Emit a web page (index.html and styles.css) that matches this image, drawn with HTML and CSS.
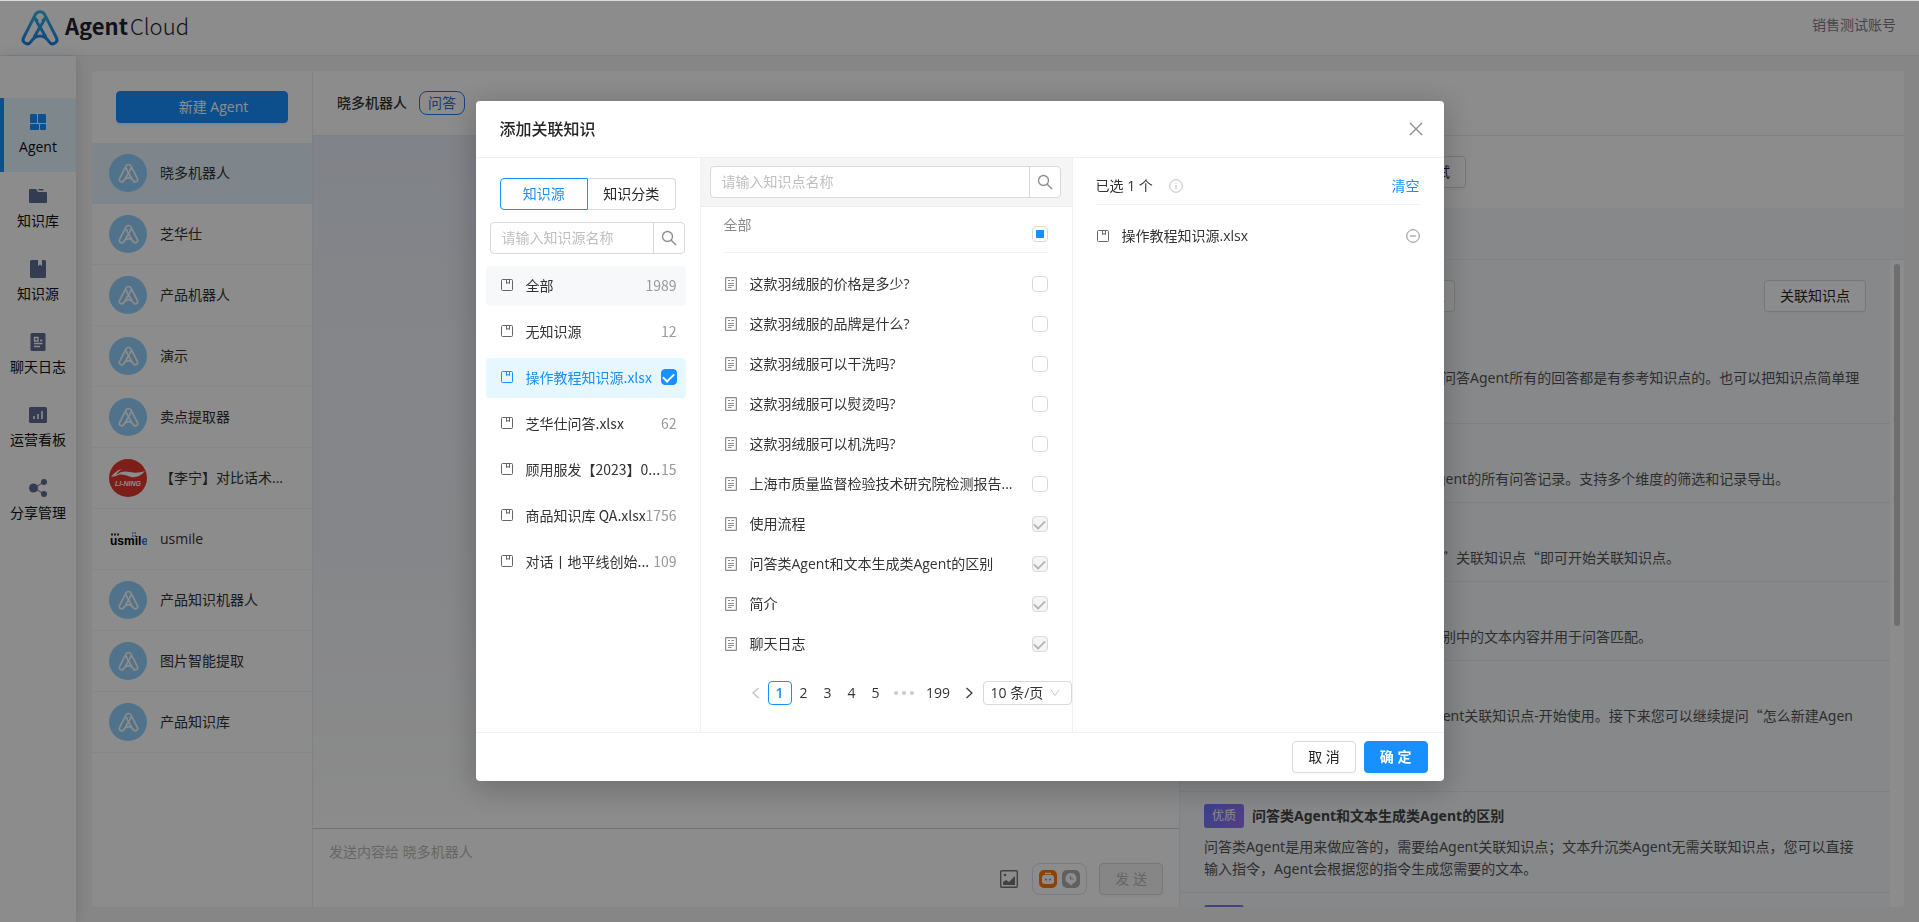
FILE: index.html
```html
<!DOCTYPE html>
<html lang="zh-CN">
<head>
<meta charset="utf-8">
<meta name="viewport" content="width=device-width, initial-scale=1">
<title>Agent Cloud</title>
<link rel="stylesheet" href="styles.css">
</head>
<body>
<svg class="defs" aria-hidden="true">
  <defs>
    <linearGradient id="logo-fill" x1="0" y1="0" x2="0" y2="1"><stop offset="0" stop-color="#35b6e8"/><stop offset="1" stop-color="#1b7fe8"/></linearGradient>
    <symbol id="mark" viewBox="0 0 38 37">
      <path d="M2.6 28.6 14.3 5.6a5.3 5.3 0 0 1 9.4 0l11.7 23c2.4 5.3-4.6 8.4-7.3 4.2C25.6 28.8 23.400 27 19 27s-6.600 1.800-9.100 5.800c-2.700 4.200-9.700 1.100-7.300-4.200ZM14.300 9.500c.600 2.500 2.500 5 4.700 8.500l5.500 9.400M23.700 9.500c-.600 2.500-2.500 5-4.700 8.500l-5.500 9.400M14.300 9.500a5 5 0 0 0 1.700 2M23.700 9.500a5 5 0 0 1-1.700 2" fill="none" stroke-width="3" stroke-linejoin="round" stroke-linecap="round"/>
    </symbol>
    <symbol id="book" viewBox="0 0 14 14"><path d="M2.500 1.500h9a1 1 0 0 1 1 1v9a1 1 0 0 1-1 1h-9a1 1 0 0 1-1-1v-9a1 1 0 0 1 1-1ZM6.500 1.500v4l1.500-1 1.500 1v-4" fill="none" stroke="currentColor"/></symbol>
    <symbol id="doc" viewBox="0 0 14 14"><rect x="1.600" y=".6" width="10.800" height="12.800" rx=".6" fill="none" stroke="currentColor" stroke-width="1.200"/><path d="M4 3.500h2M7.500 3.500H10M4 6.500h6M4 8.500h6M4 10.500h3.500" fill="none" stroke="currentColor"/></symbol>
    <symbol id="search" viewBox="0 0 16 16"><circle cx="6.500" cy="6.500" r="5" fill="none" stroke="currentColor" stroke-width="1.300"/><path d="m10.200 10.200 4.800 4.800" stroke="currentColor" stroke-width="1.400"/></symbol>
  </defs>
</svg>

<div class="app">
  <header class="topbar">
    <div class="brand">
      <svg class="brand-mark" stroke="url(#logo-fill)"><use href="#mark"/></svg>
      <span class="brand-name"><b>Agent</b>Cloud</span>
    </div>
    <span class="account">销售测试账号</span>
  </header>

  <div class="shell">
    <nav class="side">
      <a class="side-item active" href="#">
        <svg viewBox="0 0 18 18" fill="currentColor"><rect x="1" y="1" width="7" height="9" rx="1"/><rect x="9" y="1" width="8" height="9" rx="1"/><rect x="1" y="11" width="9" height="6" rx="1"/><rect x="11" y="11" width="6" height="6" rx="1"/></svg>
        <span>Agent</span></a>
      <a class="side-item" href="#">
        <svg viewBox="0 0 18 18" fill="currentColor"><path d="M0 3a1 1 0 0 1 1-1h6l2 3h8a1 1 0 0 1 1 1v9a1 1 0 0 1-1 1H1a1 1 0 0 1-1-1ZM9 2h5l1 1.500h-5Z"/></svg>
        <span>知识库</span></a>
      <a class="side-item" href="#">
        <svg viewBox="0 0 18 18" fill="currentColor"><path d="M2 0h7v6l2-1.500L13 6V0h2.500A1.500 1.500 0 0 1 17 1.500v15a1.500 1.500 0 0 1-1.500 1.500h-13A1.500 1.500 0 0 1 1 16.500v-15Z"/></svg>
        <span>知识源</span></a>
      <a class="side-item" href="#">
        <svg viewBox="0 0 18 18"><rect x="1.500" width="15" height="18" rx="1.500" fill="currentColor"/><path d="M5.500 4.500h3.500v3.500H5.500ZM11 7.500h2.500M5 10.500h8.500M5 13.500h6" fill="none" stroke="#fff" stroke-width="1.300"/></svg>
        <span>聊天日志</span></a>
      <a class="side-item" href="#">
        <svg viewBox="0 0 18 18"><rect y="1" width="18" height="16" rx="1.500" fill="currentColor"/><path d="M5 13v-3M9 13V8M13 13V5" stroke="#fff" stroke-width="1.600"/></svg>
        <span>运营看板</span></a>
      <a class="side-item" href="#">
        <svg viewBox="0 0 18 18" fill="currentColor"><circle cx="4.500" cy="9" r="4.500"/><circle cx="15" cy="3" r="3"/><circle cx="15" cy="15" r="3"/><path d="m15 3-10 6 10 6" fill="none" stroke="currentColor"/></svg>
        <span>分享管理</span></a>
    </nav>

    <main class="panel">
      <section class="agents">
        <div class="agents-head"><button class="btn primary new-agent" type="button">新建 Agent</button></div>
        <ul class="agent-list">
          <li class="current"><span class="avatar"><svg><use href="#mark"/></svg></span>晓多机器人</li>
          <li><span class="avatar"><svg><use href="#mark"/></svg></span>芝华仕</li>
          <li><span class="avatar"><svg><use href="#mark"/></svg></span>产品机器人</li>
          <li><span class="avatar"><svg><use href="#mark"/></svg></span>演示</li>
          <li><span class="avatar"><svg><use href="#mark"/></svg></span>卖点提取器</li>
          <li><svg class="avatar-pic" viewBox="0 0 38 38"><circle cx="19" cy="19" r="19" fill="#e5382d"/><path d="M2 18c3-4 6-7 11-8-3 2-5 4-6 6 5-4 9-4 14-3 5 1 9 1 15-1-4 5-9 7-14 6-6-2-10-4-15-1Z" fill="#fff"/><text class="pic-lining" x="19" y="27" text-anchor="middle" fill="#fff">LI-NING</text></svg>【李宁】对比话术...</li>
          <li><svg class="avatar-pic" viewBox="0 0 38 38"><text class="pic-usmile" x="1" y="25">usmil<tspan fill="#2b7fd6">e</tspan></text><path d="M2 14.500h9" stroke="#333" stroke-width="2" stroke-dasharray="2 1"/><path d="M23 13h4M23 16h4" stroke="#2b7fd6" stroke-width="1.500" stroke-dasharray="1.500 1"/></svg>usmile</li>
          <li><span class="avatar"><svg><use href="#mark"/></svg></span>产品知识机器人</li>
          <li><span class="avatar"><svg><use href="#mark"/></svg></span>图片智能提取</li>
          <li><span class="avatar"><svg><use href="#mark"/></svg></span>产品知识库</li>
        </ul>
      </section>

      <div class="work">
        <div class="work-head"><h1>晓多机器人</h1><span class="kind">问答</span></div>
        <section class="chat">
          <div class="messages"></div>
          <form class="composer">
            <textarea aria-label="消息" placeholder="发送内容给 晓多机器人"></textarea>
            <div class="composer-tools">
              <svg class="image-icon" viewBox="0 0 18 18"><rect x=".7" y=".7" width="16.600" height="16.600" rx="1" fill="none" stroke="#777" stroke-width="1.400"/><circle cx="5" cy="5" r="1.300" fill="#777"/><path d="m3 15 0-3 3-2 3 2 6-6v9Z" fill="#777"/></svg>
              <span class="modes">
                <svg viewBox="0 0 18 18"><rect width="18" height="18" rx="5" fill="#ff7a00"/><rect x="3" y="5" width="12" height="9" rx="2.500" fill="#fff"/><path d="M6 3.500h6" stroke="#fff" stroke-width="1.400"/><circle cx="7" cy="9.500" r="1" fill="#ff7a00"/><circle cx="11" cy="9.500" r="1" fill="#ff7a00"/></svg>
                <svg viewBox="0 0 18 18"><rect width="18" height="18" rx="5" fill="#b0b0b0"/><path d="M9 3a5.500 5.500 0 0 1 2 10.600L9 15.500l-2-1.900A5.500 5.500 0 0 1 9 3Z" fill="#fff"/><path d="M8.500 6v3h3" fill="none" stroke="#b0b0b0" stroke-width="1.200"/></svg>
              </span>
              <button class="btn send" type="button" disabled>发 送</button>
            </div>
          </form>
        </section>

        <aside class="knowledge">
          <div class="actions">
            <button class="btn" type="button">发布设置</button>
            <button class="btn" type="button">去分享</button>
            <button class="btn" type="button">去测试</button>
          </div>
          <div class="strip"></div>
          <div class="scroller">
            <div class="points">
              <div class="filter">
                <label class="filter-box"><input type="search" aria-label="搜索知识点"><svg><use href="#search"/></svg></label>
                <button class="btn" type="button">关联知识点</button>
              </div>
              <article class="point">
                <h2><span class="tag">优质</span>知识点</h2>
                <p>知识点是机器人回答问题的参考内容，问答Agent所有的回答都是有参考知识点的。也可以把知识点简单理解为问题和答案。</p>
              </article>
              <article class="point">
                <h2><span class="tag">优质</span>聊天日志</h2>
                <p>聊天日志中可以查看到当前已创建的Agent的所有问答记录。支持多个维度的筛选和记录导出。</p>
              </article>
              <article class="point">
                <h2><span class="tag">优质</span>关联知识点</h2>
                <p>在知识点列表页面的右上角位置处点击<span class="quote">”</span>关联知识点<span class="quote">“</span>即可开始关联知识点。</p>
              </article>
              <article class="point">
                <h2><span class="tag">优质</span>简介</h2>
                <p>关联后系统会自动学习所选择的知识类别中的文本内容并用于问答匹配。</p>
              </article>
              <article class="point">
                <h2><span class="tag">优质</span>使用流程</h2>
                <p>使用流程简单来说就是新建Agent给Agent关联知识点-开始使用。接下来您可以继续提问<span class="quote">“</span>怎么新建Agent<span class="quote">”</span>。</p>
                <p>也可以查看其他知识点。</p>
              </article>
              <article class="point">
                <h2><span class="tag">优质</span>问答类Agent和文本生成类Agent的区别</h2>
                <p>问答类Agent是用来做应答的，需要给Agent关联知识点；文本升沉类Agent无需关联知识点，您可以直接输入指令，Agent会根据您的指令生成您需要的文本。</p>
              </article>
              <article class="point">
                <h2><span class="tag"></span></h2>
              </article>
            </div>
            <div class="track"><div class="thumb"></div></div>
          </div>
        </aside>
      </div>
    </main>
  </div>
</div>

<div class="mask">
  <div class="modal" role="dialog" aria-labelledby="modal-title">
    <header class="modal-head">
      <h2 id="modal-title">添加关联知识</h2>
      <button class="icon-btn" type="button" aria-label="关闭"><svg class="close" viewBox="0 0 14 14"><path d="m1 1 12 12M13 1 1 13" stroke="currentColor" stroke-width="1.300"/></svg></button>
    </header>

    <div class="modal-body">
      <section class="sources">
        <div class="tabs">
          <button class="tab on" type="button">知识源</button>
          <button class="tab" type="button">知识分类</button>
        </div>
        <div class="search source-search">
          <input type="text" aria-label="知识源名称" placeholder="请输入知识源名称">
          <button type="button" aria-label="搜索"><svg><use href="#search"/></svg></button>
        </div>
        <ul class="source-list">
          <li class="hover"><svg><use href="#book"/></svg><span class="name">全部</span><span class="count">1989</span></li>
          <li><svg><use href="#book"/></svg><span class="name">无知识源</span><span class="count">12</span></li>
          <li class="picked"><svg><use href="#book"/></svg><label class="name" for="src-1">操作教程知识源.xlsx</label><input class="check" id="src-1" type="checkbox" checked></li>
          <li><svg><use href="#book"/></svg><span class="name">芝华仕问答.xlsx</span><span class="count">62</span></li>
          <li><svg><use href="#book"/></svg><span class="name">顾用服发【2023】0...</span><span class="count">15</span></li>
          <li><svg><use href="#book"/></svg><span class="name">商品知识库 QA.xlsx</span><span class="count">1756</span></li>
          <li><svg><use href="#book"/></svg><span class="name">对话丨地平线创始...</span><span class="count">109</span></li>
        </ul>
      </section>

      <section class="items">
        <div class="items-search">
          <div class="search">
            <input type="text" aria-label="知识点名称" placeholder="请输入知识点名称">
            <button type="button" aria-label="搜索"><svg><use href="#search"/></svg></button>
          </div>
        </div>
        <div class="all-row"><label for="all">全部</label><input class="check partial" id="all" type="checkbox"></div>
        <ul class="item-list">
          <li><svg><use href="#doc"/></svg><label for="k1">这款羽绒服的价格是多少?</label><input class="check" id="k1" type="checkbox"></li>
          <li><svg><use href="#doc"/></svg><label for="k2">这款羽绒服的品牌是什么?</label><input class="check" id="k2" type="checkbox"></li>
          <li><svg><use href="#doc"/></svg><label for="k3">这款羽绒服可以干洗吗?</label><input class="check" id="k3" type="checkbox"></li>
          <li><svg><use href="#doc"/></svg><label for="k4">这款羽绒服可以熨烫吗?</label><input class="check" id="k4" type="checkbox"></li>
          <li><svg><use href="#doc"/></svg><label for="k5">这款羽绒服可以机洗吗?</label><input class="check" id="k5" type="checkbox"></li>
          <li><svg><use href="#doc"/></svg><label for="k6">上海市质量监督检验技术研究院检测报告...</label><input class="check" id="k6" type="checkbox"></li>
          <li><svg><use href="#doc"/></svg><label for="k7">使用流程</label><input class="check" id="k7" type="checkbox" checked disabled></li>
          <li><svg><use href="#doc"/></svg><label for="k8">问答类Agent和文本生成类Agent的区别</label><input class="check" id="k8" type="checkbox" checked disabled></li>
          <li><svg><use href="#doc"/></svg><label for="k9">简介</label><input class="check" id="k9" type="checkbox" checked disabled></li>
          <li><svg><use href="#doc"/></svg><label for="k10">聊天日志</label><input class="check" id="k10" type="checkbox" checked disabled></li>
        </ul>
        <div class="pager">
          <button type="button" aria-label="上一页" disabled><svg viewBox="0 0 12 12"><path d="M8.500 1 3 6l5.500 5" fill="none" stroke="currentColor" stroke-width="1.200"/></svg></button>
          <button class="on" type="button">1</button>
          <button type="button">2</button>
          <button type="button">3</button>
          <button type="button">4</button>
          <button type="button">5</button>
          <span class="dots"><i></i><i></i><i></i></span>
          <button class="wide" type="button">199</button>
          <button type="button" aria-label="下一页"><svg viewBox="0 0 12 12"><path d="M3.500 1 9 6l-5.500 5" fill="none" stroke="currentColor" stroke-width="1.200"/></svg></button>
          <label class="size"><select aria-label="每页条数"><option>10 条/页</option></select><svg viewBox="0 0 12 12"><path d="m1 2 5 7 5-7" fill="none" stroke="currentColor"/></svg></label>
        </div>
      </section>

      <section class="chosen">
        <div class="chosen-head">
          <span>已选 1 个</span>
          <svg class="info" viewBox="0 0 14 14" fill="none" stroke="currentColor"><circle cx="7" cy="7" r="6.300"/><path d="M7 6v4.500M7 3.500v1.200"/></svg>
          <a href="#">清空</a>
        </div>
        <div class="chosen-item">
          <svg class="book"><use href="#book"/></svg>
          <span>操作教程知识源.xlsx</span>
          <button class="icon-btn" type="button" aria-label="移除"><svg viewBox="0 0 14 14" fill="none" stroke="currentColor"><circle cx="7" cy="7" r="6.300"/><path d="M4 7h6"/></svg></button>
        </div>
      </section>
    </div>

    <footer class="modal-foot">
      <button class="btn" type="button">取 消</button>
      <button class="btn primary strong" type="button">确 定</button>
    </footer>
  </div>
</div>
</body>
</html>
```
FILE: styles.css
```css
* { box-sizing: border-box; }

body {
  margin: 0;
  height: 100vh;
  overflow: hidden;
  padding-top: 1px;
  background: #d8dcda;
  color: #333;
  font: 14px/22px "Open Sans", "Noto Sans CJK SC", sans-serif;
}

h1, h2, p, ul { margin: 0; padding: 0; }
ul { list-style: none; }
a { text-decoration: none; }
button, input, select, textarea { font: inherit; color: inherit; margin: 0; }
button { cursor: pointer; }
svg { display: block; flex: none; }
.defs { width: 0; height: 0; position: absolute; }

.app { height: 100%; display: flex; flex-direction: column; background: #f5f5f5; }

.topbar {
  flex: none;
  height: 55px;
  display: flex;
  align-items: center;
  justify-content: space-between;
  padding: 0 23px 6px 21px;
  background: #fff;
  border-bottom: 1px solid #e8e8e8;
}
.brand { display: flex; align-items: center; gap: 6px; }
.brand-mark { width: 38px; height: 37px; margin-top: 4px; }
.brand-name { font-family: "Noto Sans CJK SC", sans-serif; font-size: 22px; font-weight: 300; line-height: 32px; color: #1f2430; display: flex; gap: 2px; }
.brand-name b { font-weight: 700; }
.account { color: #7d8087; }

.shell { flex: 1; min-height: 0; display: flex; gap: 16px; }

.side {
  flex: none;
  width: 76px;
  padding-top: 42px;
  background: #fff;
  box-shadow: 2px 0 12px rgba(60, 80, 120, .16);
}
.side-item {
  height: 73px;
  padding-top: 15px;
  display: flex;
  flex-direction: column;
  align-items: center;
  gap: 5px;
  color: #606e94;
}
.side-item svg { width: 18px; height: 18px; }
.side-item span { color: #111; }
.side-item.active { height: 74px; background: #e5f6fd; border-left: 4px solid #1890ff; padding-right: 4px; color: #1890ff; }

.panel {
  flex: 1;
  min-width: 0;
  margin: 15px 15px 15px 0;
  display: flex;
  background: #fff;
  border-radius: 4px;
  overflow: hidden;
}

.btn {
  height: 32px;
  padding: 0 15px;
  border: 1px solid #d9d9d9;
  border-radius: 4px;
  background: #fff;
  color: #262626;
  line-height: 22px;
  white-space: nowrap;
  box-shadow: 0 2px 0 rgba(0, 0, 0, .02);
}
.btn.primary { background: #1890ff; border-color: #1890ff; color: #fff; box-shadow: 0 2px 0 rgba(0, 0, 0, .05); }
.btn.strong { font-weight: 600; }

.agents { flex: none; width: 221px; border-right: 1px solid #ececf0; }
.agents-head { padding: 20px 24px; display: flex; }
.new-agent { flex: 1; padding-left: 38px; }
.agent-list li {
  height: 61px;
  padding-left: 17px;
  display: flex;
  align-items: center;
  gap: 13px;
  border-bottom: 1px solid #f4f4f6;
}
.agent-list .current { background: #e5f4fd; border-color: #e5f4fd; }
.avatar { width: 38px; height: 38px; border-radius: 50%; background: #93d2fe; display: grid; place-items: center; }
.avatar svg { width: 21px; height: 20px; stroke: #fff; }
.avatar-pic { width: 38px; height: 38px; }
.pic-lining { font: italic 700 7px "Liberation Sans", sans-serif; }
.pic-usmile { font: 700 12px "Liberation Sans", sans-serif; }

.work {
  flex: 1;
  min-width: 0;
  display: grid;
  grid-template-columns: 867fr 724fr;
  grid-template-rows: 65px minmax(0, 1fr);
}
.work-head { grid-column: 1 / -1; display: flex; align-items: center; gap: 12px; padding-left: 24px; border-bottom: 1px solid #e8e8e8; }
.work-head h1 { font-size: 14px; font-weight: 500; }
.kind { height: 24px; padding: 0 8px; border: 1px solid #2878ef; border-radius: 8px; color: #2f6bea; }

.chat { display: flex; flex-direction: column; min-height: 0; border-right: 1px solid #ececf0; }
.messages { flex: 1; background: linear-gradient(#eaeefa, #f0f4fa 30%, #f3f5fa 60%, #f9fafb 85%, #fff); }
.composer { height: 79px; padding: 12px 16px; border-top: 1px solid #cfcfcf; display: flex; flex-direction: column; }
.composer textarea { flex: 1; min-height: 0; padding: 0; border: 0; resize: none; background: none; outline: 0; }
.composer textarea::placeholder { color: #bbb; }
.composer-tools { display: flex; justify-content: flex-end; align-items: center; gap: 12px; }
.image-icon { width: 18px; height: 18px; margin-right: 2px; }
.modes { height: 32px; padding: 0 6px; display: flex; align-items: center; gap: 5px; border: 1px solid #dde1ee; border-radius: 8px; }
.modes svg { width: 18px; height: 18px; }
.send { background: #f5f5f5; color: #b8b8b8; }

.knowledge { display: flex; flex-direction: column; min-height: 0; }
.actions { flex: none; height: 72px; padding: 20px 24px; display: flex; gap: 13px; }
.strip { flex: none; height: 52px; background: #f4f7fb; border-bottom: 1px solid #eaecf0; }
.scroller { flex: 1; min-height: 0; display: flex; }
.points { flex: 1; min-width: 0; overflow: hidden; background: #f4f7fb; }
.track { flex: none; width: 14px; padding: 4px; }
.thumb { width: 6px; height: 362px; border-radius: 3px; background: #c8c8c8; }
.filter { height: 63px; padding: 20px 24px 0; display: flex; justify-content: space-between; }
.filter-box { width: 251px; height: 32px; padding: 0 9px; display: flex; align-items: center; background: #fff; border: 1px solid #d9d9d9; border-radius: 4px; }
.filter-box input { flex: 1; min-width: 0; border: 0; background: none; outline: 0; }
.filter-box svg { width: 14px; height: 14px; }
.point { padding: 12px 30px 12px 24px; border-bottom: 1px solid #e6e9ee; word-break: break-all; font-family: "Noto Sans", "Noto Sans CJK SC", sans-serif; }
.point h2 { display: flex; align-items: center; gap: 8px; margin-bottom: 8px; font-size: 14px; line-height: 24px; font-weight: 700; color: #444; }
.point p { color: #555; }
.point p + p { margin-top: 8px; }
.tag { min-width: 40px; min-height: 24px; padding: 0 8px; border-radius: 3px; background: linear-gradient(120deg, #6b78fb, #9a70ef); color: #fff; font-size: 12px; font-weight: 400; }
.quote { font-family: "Noto Sans CJK SC", sans-serif; line-height: 16px; }

/* Dialog */
.mask {
  position: fixed;
  inset: 1px 0 0;
  display: flex;
  justify-content: center;
  align-items: flex-start;
  padding-top: 100px;
  background: rgba(0, 0, 0, .45);
}
.modal {
  width: 968px;
  display: flex;
  flex-direction: column;
  background: #fff;
  border-radius: 4px;
  box-shadow: 0 6px 30px 4px rgba(0, 0, 0, .2);
}
.modal-head { height: 57px; padding: 0 21px 0 24px; display: flex; align-items: center; justify-content: space-between; border-bottom: 1px solid #f0f0f0; }
.modal-head h2 { font-size: 16px; font-weight: 500; color: #262626; }
.icon-btn { padding: 0; border: 0; background: none; color: #8c8c8c; }
.icon-btn svg { width: 14px; height: 14px; }
.modal-body { display: grid; grid-template-columns: 225px 372px minmax(0, 1fr); }
.modal-foot { padding: 8px 16px; display: flex; justify-content: flex-end; gap: 8px; border-top: 1px solid #f0f0f0; }

.sources { padding: 20px 14px 0 10px; border-right: 1px solid #f0f0f0; }
.tabs { display: flex; margin: 0 10px 12px 14px; }
.tab { flex: 1; height: 32px; padding: 0; border: 1px solid #d9d9d9; border-left: 0; border-radius: 0 4px 4px 0; background: #fff; color: #262626; }
.tab.on { border: 1px solid #1890ff; border-radius: 4px 0 0 4px; color: #1890ff; }
.search { height: 32px; display: flex; border: 1px solid #d9d9d9; border-radius: 4px; background: #fff; }
.source-search { margin: 0 1px 12px 4px; }
.search input { flex: 1; min-width: 0; padding: 0 11px; border: 0; background: none; outline: 0; }
.search input::placeholder { color: #bfbfbf; }
.search button { width: 31px; padding: 0; display: grid; place-items: center; border: 0; border-left: 1px solid #d9d9d9; background: none; color: #8c8c8c; }
.search svg { width: 16px; height: 16px; }

.source-list { display: flex; flex-direction: column; gap: 6px; font-family: "Noto Sans CJK SC", sans-serif; }
.source-list li { height: 40px; padding: 0 9px 2px 14px; display: flex; align-items: center; border-radius: 4px; }
.source-list svg { width: 14px; height: 14px; margin-right: 12px; color: #666; }
.source-list .name { flex: 1; min-width: 0; white-space: nowrap; }
.count { color: #999; }
.source-list .hover { background: #f7f8fa; }
.source-list .picked, .source-list .picked svg { color: #1890ff; }
.source-list .picked { background: #e6f7ff; }

.check {
  appearance: none;
  flex: none;
  width: 16px;
  height: 16px;
  display: grid;
  place-items: center;
  border: 1px solid #d9d9d9;
  border-radius: 4px;
  background: #fff;
}
.check:checked { background: #1890ff; border-color: #1890ff; }
.check:checked::before { content: ""; width: 5px; height: 9px; margin-bottom: 2px; border: solid #fff; border-width: 0 2px 2px 0; transform: rotate(45deg); }
.check:disabled { background: #f5f5f5; border-color: #d9d9d9; }
.check:disabled::before { border-color: #b8b8b8; }
.check.partial::before { content: ""; width: 8px; height: 8px; background: #1890ff; }

.items { display: flex; flex-direction: column; border-right: 1px solid #f0f0f0; }
.items-search { padding: 8px 11px 8px 9px; background: #f5f5f5; border-bottom: 1px solid #ececec; }
.all-row { height: 46px; margin: 0 24px 11px 23px; padding-top: 7px; display: flex; justify-content: space-between; border-bottom: 1px solid #f0f0f0; color: #8c8c8c; }
.all-row .check { margin-top: 12px; }
.item-list { padding: 0 24px 0 23px; }
.item-list li { height: 40px; display: flex; align-items: center; gap: 12px; }
.item-list svg { width: 14px; height: 14px; color: #8c8c8c; }
.item-list label { flex: 1; white-space: nowrap; }

.pager { display: flex; justify-content: flex-end; padding: 17px 0 27px; }
.pager button { width: 24px; height: 24px; padding: 0; display: grid; place-items: center; border: 1px solid transparent; border-radius: 4px; background: none; line-height: 22px; }
.pager .wide { width: 37px; }
.pager .on { border-color: #1890ff; color: #1890ff; font-weight: 600; }
.pager button:disabled { color: #bfbfbf; }
.pager button svg { width: 12px; height: 12px; }
.dots { width: 32px; display: flex; align-items: center; justify-content: center; gap: 4px; }
.dots i { width: 4px; height: 4px; border-radius: 50%; background: #ccc; }
.size { width: 89px; height: 24px; margin-left: 2px; padding: 0 11px 0 7px; display: flex; align-items: center; border: 1px solid #d9d9d9; border-radius: 4px; color: #bfbfbf; }
.size select { appearance: none; flex: 1; min-width: 0; padding: 0; border: 0; background: none; color: #333; outline: 0; }
.size svg { width: 10px; height: 12px; }

.chosen { padding: 17px 24px 0 23px; }
.chosen-head { height: 30px; display: flex; border-bottom: 1px solid #f0f0f0; }
.chosen-head .info { width: 14px; height: 14px; margin: 4px auto 0 16px; color: #bfbfbf; }
.chosen-head a { color: #1890ff; }
.chosen-item { margin-top: 20px; display: flex; align-items: center; gap: 12px; }
.chosen-item .book { width: 14px; height: 14px; color: #666; }
.chosen-item span { flex: 1; }
```
